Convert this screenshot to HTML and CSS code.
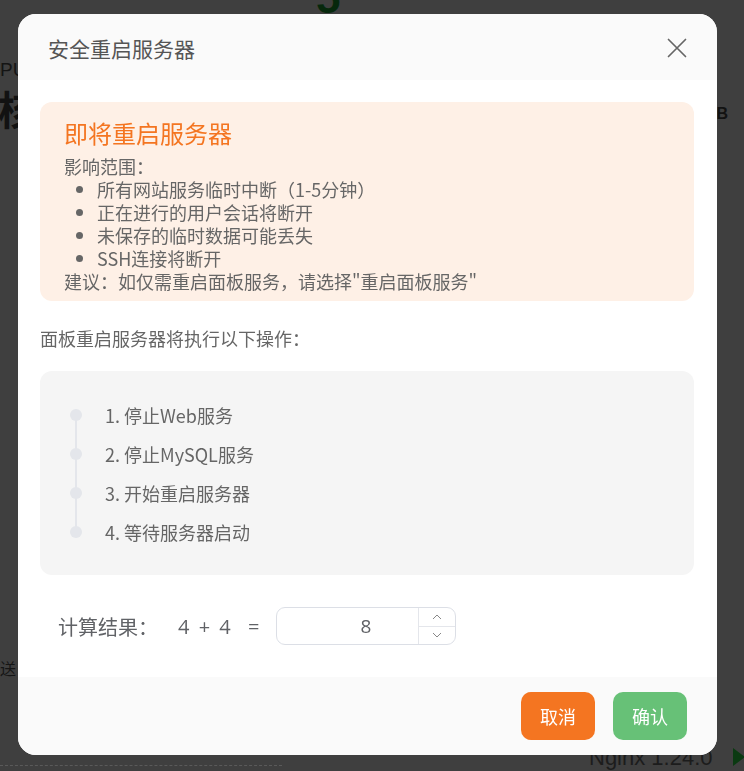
FILE: index.html
```html
<!DOCTYPE html>
<html lang="zh-CN">
<head>
<meta charset="utf-8">
<title>安全重启服务器</title>
<link rel="stylesheet" href="styles.css">
</head>
<body>
<div class="page">
  <span class="frag f-five">5</span>
  <span class="frag f-cpu">PU</span>
  <span class="frag f-core">核</span>
  <span class="frag f-gb">GB</span>
  <span class="frag f-send">送</span>
  <span class="frag f-nginx">Nginx 1.24.0</span>
  <span class="frag f-play"></span>
  <span class="frag f-dash"></span>
</div>
<div class="overlay">
  <div class="dialog">
    <div class="dlg-header">
      <span class="dlg-title">安全重启服务器</span>
      <button class="close" type="button" aria-label="关闭">
        <svg width="20" height="20" viewBox="0 0 20 20"><path d="M1.5 1.5 L18.5 18.5 M18.5 1.5 L1.5 18.5" stroke="#666" stroke-width="1.7" fill="none" stroke-linecap="round"/></svg>
      </button>
    </div>
    <div class="dlg-body">
      <div class="warn">
        <div class="warn-title">即将重启服务器</div>
        <div class="warn-text">影响范围：</div>
        <ul class="warn-list">
          <li>所有网站服务临时中断（1-5分钟）</li>
          <li>正在进行的用户会话将断开</li>
          <li>未保存的临时数据可能丢失</li>
          <li>SSH连接将断开</li>
        </ul>
        <div class="warn-text">建议：如仅需重启面板服务，请选择"重启面板服务"</div>
      </div>
      <p class="intro">面板重启服务器将执行以下操作：</p>
      <div class="steps">
        <ul class="timeline">
          <li><span class="dot"></span><span>1. 停止Web服务</span></li>
          <li><span class="dot"></span><span>2. 停止MySQL服务</span></li>
          <li><span class="dot"></span><span>3. 开始重启服务器</span></li>
          <li><span class="dot"></span><span>4. 等待服务器启动</span></li>
        </ul>
      </div>
      <div class="calc">
        <span class="calc-label">计算结果：</span>
        <span class="calc-expr">4 + 4</span>
        <span class="calc-eq">=</span>
        <div class="num-input">
          <input class="num-field" type="text" value="8">
          <div class="num-ctrl">
            <span class="num-btn"><svg width="10" height="6" viewBox="0 0 10 6"><path d="M1 5 L5 1 L9 5" stroke="#888" stroke-width="1" fill="none"/></svg></span>
            <span class="num-btn"><svg width="10" height="6" viewBox="0 0 10 6"><path d="M1 1 L5 5 L9 1" stroke="#888" stroke-width="1" fill="none"/></svg></span>
          </div>
        </div>
      </div>
    </div>
    <div class="dlg-footer">
      <button class="btn btn-cancel" type="button">取消</button>
      <button class="btn btn-ok" type="button">确认</button>
    </div>
  </div>
</div>
</body>
</html>
```
FILE: styles.css
```css
* { box-sizing: border-box; }
html, body {
  margin: 0;
  padding: 0;
  width: 744px;
  height: 771px;
  overflow: hidden;
}
body {
  background: #3f3f3f;
  font-family: "Noto Sans CJK SC", "Microsoft YaHei", sans-serif;
  color: #666;
}
.page {
  position: relative;
  width: 744px;
  height: 771px;
}
.frag {
  position: absolute;
  color: #121212;
  white-space: nowrap;
}
.f-five {
  left: 316px;
  top: -24px;
  font-size: 44px;
  font-weight: 700;
  line-height: 44px;
  color: #06280c;
  font-family: "Liberation Sans", sans-serif;
}
.f-cpu {
  left: 0;
  top: 60px;
  font-size: 19px;
  line-height: 20px;
  font-family: "Liberation Sans", sans-serif;
  color: #141414;
}
.f-core {
  left: -2px;
  top: 84px;
  font-size: 40px;
  line-height: 48px;
  font-weight: 700;
  color: #121212;
}
.f-gb {
  left: 704px;
  top: 105px;
  font-size: 16px;
  line-height: 18px;
  font-weight: 700;
  font-family: "Liberation Sans", sans-serif;
}
.f-send {
  left: 0;
  top: 656px;
  font-size: 16px;
  line-height: 24px;
  color: #151515;
}
.f-nginx {
  left: 589px;
  top: 744px;
  font-size: 22px;
  line-height: 28px;
  color: #1c1c1c;
  font-family: "Liberation Sans", sans-serif;
}
.f-play {
  left: 733px;
  top: 748px;
  width: 0;
  height: 0;
  border-top: 9px solid transparent;
  border-bottom: 9px solid transparent;
  border-left: 12px solid #0b3a12;
}
.f-dash {
  left: 0;
  top: 765px;
  width: 282px;
  border-top: 1px dashed #5a5a5a;
}

.overlay {
  position: fixed;
  inset: 0;
  padding: 14px 0 0 18px;
}
.dialog {
  width: 699px;
  height: 741px;
  background: #fff;
  border-radius: 18px;
  overflow: hidden;
  display: flex;
  flex-direction: column;
}
.dlg-header {
  height: 66px;
  background: #fafafa;
  display: flex;
  align-items: center;
  justify-content: space-between;
  padding: 0 30px 0 30px;
}
.dlg-title {
  font-size: 21px;
  line-height: 28px;
  color: #555;
  margin-top: 2px;
}
.close {
  border: 0;
  background: transparent;
  padding: 0;
  width: 20px;
  height: 20px;
  display: flex;
  margin-top: 2px;
}
.dlg-body {
  flex: 1;
  padding: 22px 23px 32px 22px;
}
.warn {
  background: #fef0e6;
  border-radius: 12px;
  padding: 16px 24px 8px;
}
.warn-title {
  color: #f47521;
  font-size: 24px;
  line-height: 30px;
  margin-bottom: 7px;
}
.warn-text {
  font-size: 18px;
  line-height: 23px;
  color: #666;
}
.warn-list {
  margin: 0;
  padding-left: 33px;
  font-size: 18px;
  line-height: 23px;
  color: #666;
}
.intro {
  margin: 25px 0 21px;
  font-size: 18px;
  line-height: 24px;
  color: #666;
}
.steps {
  background: #f5f5f5;
  border-radius: 12px;
  padding: 24px 30px;
}
.timeline {
  list-style: none;
  margin: 0;
  padding: 0;
  position: relative;
}
.timeline::before {
  content: "";
  position: absolute;
  left: 5px;
  top: 19px;
  bottom: 19px;
  width: 2px;
  background: #e4e6eb;
}
.timeline li {
  height: 39px;
  display: flex;
  align-items: center;
  gap: 23px;
  font-size: 18px;
  color: #666;
  position: relative;
}
.dot {
  width: 12px;
  height: 12px;
  border-radius: 50%;
  background: #e4e6eb;
  flex: none;
}
.calc {
  margin-top: 32px;
  padding-left: 18px;
  display: flex;
  align-items: center;
  height: 38px;
  color: #606266;
}
.calc-label {
  font-size: 20px;
  width: 120px;
}
.calc-expr {
  font-size: 20px;
  word-spacing: 4px;
  width: 70px;
  font-family: "Open Sans", "Noto Sans CJK SC", sans-serif;
}
.calc-eq {
  font-size: 20px;
  width: 28px;
  font-family: "Open Sans", sans-serif;
}
.num-input {
  position: relative;
  width: 180px;
  height: 38px;
  border: 1px solid #dcdfe6;
  border-radius: 9px;
  background: #fff;
}
.num-field {
  width: 100%;
  height: 100%;
  border: 0;
  outline: none;
  background: transparent;
  text-align: center;
  font-size: 19px;
  color: #606266;
  font-family: "Open Sans", sans-serif;
  padding: 0 4px;
}
.num-ctrl {
  position: absolute;
  right: 0;
  top: 0;
  bottom: 0;
  width: 37px;
  border-left: 1px solid #e4e6eb;
  display: flex;
  flex-direction: column;
}
.num-btn {
  flex: 1;
  display: flex;
  align-items: center;
  justify-content: center;
}
.num-btn + .num-btn {
  border-top: 1px solid #e4e6eb;
}
.dlg-footer {
  height: 78px;
  background: #fafafa;
  display: flex;
  justify-content: flex-end;
  align-items: center;
  gap: 18px;
  padding: 0 30px 0 0;
}
.btn {
  width: 74px;
  height: 48px;
  border: 0;
  border-radius: 10px;
  color: #fff;
  font-size: 18px;
  font-family: "Noto Sans CJK SC", sans-serif;
  padding: 0;
}
.btn-cancel { background: #f47521; }
.btn-ok { background: #67c177; }
```
